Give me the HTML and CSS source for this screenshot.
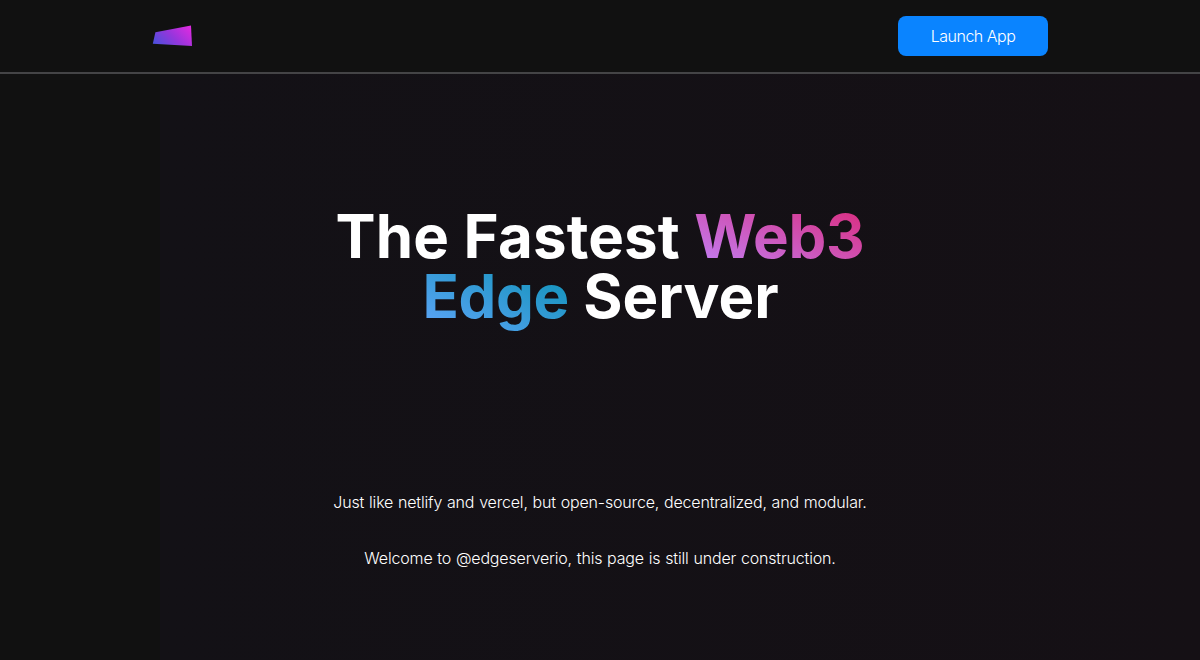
FILE: index.html
```html
<!DOCTYPE html>
<html lang="en">
<head>
<meta charset="utf-8">
<title>Edge Server</title>
<link rel="stylesheet" href="styles.css">
</head>
<body>
<header class="navbar">
  <div class="navbar-inner">
    <a class="logo" aria-label="Home">
      <svg width="40" height="40" viewBox="0 0 40 40">
        <defs>
          <linearGradient id="brand" gradientUnits="userSpaceOnUse" x1="8" y1="34" x2="34" y2="8">
            <stop offset="0" stop-color="#4a50dc"/>
            <stop offset=".5" stop-color="#9436dc"/>
            <stop offset="1" stop-color="#dc2be0"/>
          </linearGradient>
        </defs>
        <path d="M3.4 16.2 39 9.5 40 30 .8 27.8Z" fill="url(#brand)"/>
      </svg>
    </a>
    <button class="launch">Launch App</button>
  </div>
</header>
<main class="hero">
  <h1 class="title"><span class="opening">The Fastest</span> <span class="pink">Web3</span><br><span class="blue">Edge</span> Server</h1>
  <p class="lead">Just like netlify and vercel, but open-source, decentralized, and modular.</p>
  <p class="note">Welcome to @edgeserverio, this page is still under construction.</p>
</main>
</body>
</html>
```
FILE: styles.css
```css
* { box-sizing: border-box; }
body {
  margin: 0;
  min-height: 660px;
  display: flex;
  flex-direction: column;
  overflow: hidden;
  background: #111;
  color: #fff;
  font: 16px/24px Inter, sans-serif;
}
.navbar {
  height: 74px;
  border-bottom: 2px solid #444446;
  background: #111;
}
.navbar-inner {
  width: 896px;
  height: 72px;
  margin: 0 auto;
  display: flex;
  align-items: center;
  justify-content: space-between;
}
.logo { display: flex; height: 40px; }
.launch {
  width: 150px;
  height: 40px;
  padding: 0;
  border: 0;
  border-radius: 8px;
  background: #0a84ff;
  color: #fff;
  font: 300 16px/24px Inter, sans-serif;
  letter-spacing: -0.5px;
}
.hero {
  flex: 1;
  text-align: center;
  padding-top: 132px;
  background: linear-gradient(90deg, #111 160px, #131116 160px, #151015);
}
.title {
  margin: 0 0 164px;
  font-size: 60px;
  line-height: 60px;
  font-weight: 700;
}
.opening { letter-spacing: 0.15px; }
.pink, .blue {
  -webkit-background-clip: text;
  background-clip: text;
  color: transparent;
}
.pink {
  background-image: linear-gradient(to top right, #c084fc, #db2777);
  letter-spacing: -0.35px;
}
.blue {
  margin-left: 1px;
  background-image: linear-gradient(to top right, #60a5fa, #0891b2);
  letter-spacing: -0.35px;
}
.lead, .note {
  font-weight: 300;
  letter-spacing: -0.17px;
  word-spacing: 0.5px;
}
.lead { margin: 0 0 32px; }
.note { margin: 0; }
```
